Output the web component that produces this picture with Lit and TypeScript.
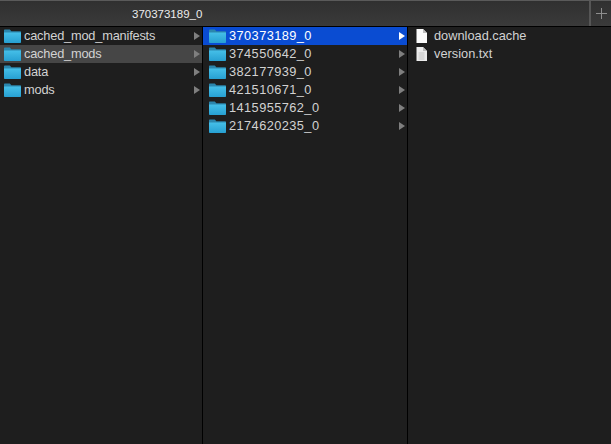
import { LitElement, html, css, svg } from "lit";
import { customElement } from "lit/decorators.js";

const folder = svg`<svg class="ic" width="17" height="14" viewBox="0 0 17 14">
  <defs><linearGradient id="fg" x1="0" y1="0" x2="0" y2="1"><stop offset="0" stop-color="#45bfe8"/><stop offset="1" stop-color="#27a0d2"/></linearGradient></defs>
  <path d="M0 1.2Q0 .5.7.5H5.8L7.4 2.2H16.3Q17 2.2 17 3V4H0Z" fill="#2b86ad"/>
  <path d="M0 3.6H17V13.2Q17 14 16.2 14H.8Q0 14 0 13.2Z" fill="url(#fg)"/>
</svg>`;

const doc = (lined: boolean) => svg`<svg class="ic" width="11" height="14" viewBox="0 0 11 14">
  <path d="M.5 0H7L11 4V14H.5Z" fill="${lined ? "#ececec" : "#fbfbfb"}"/>
  <path d="M7 0L11 4H7Z" fill="#bdbdbd"/>
  ${lined ? svg`<path d="M2.5 6H8.5M2.5 8H8.5M2.5 10H8.5M2.5 12H8.5" stroke="#c4c4c4" stroke-width="1"/>` : ""}
</svg>`;

type Row = { name: string; state?: "sel" | "path" };

const col1: Row[] = [
  { name: "cached_mod_manifests" },
  { name: "cached_mods", state: "path" },
  { name: "data" },
  { name: "mods" },
];
const col2: Row[] = [
  { name: "370373189_0", state: "sel" },
  { name: "374550642_0" },
  { name: "382177939_0" },
  { name: "421510671_0" },
  { name: "1415955762_0" },
  { name: "2174620235_0" },
];

@customElement("app-root")
export class AppRoot extends LitElement {
  static styles = css`
    :host {
      display: flex;
      flex-direction: column;
      width: 611px;
      height: 444px;
      background: #1e1e1e;
      overflow: hidden;
      font-family: "Liberation Sans", Arial, sans-serif;
      font-size: 12.8px;
      color: #d2d2d2;
    }
    .tabs {
      display: flex;
      height: 25px;
      flex: none;
      background: linear-gradient(#303030, #3a3a3a);
      border-top: 1px solid #5a5a5a;
      border-bottom: 1px solid #000;
    }
    .title {
      flex: none;
      width: 589px;
      box-sizing: border-box;
      padding: 6px 0 0 132px;
      font-size: 11.5px;
      line-height: 14px;
      color: #ececec;
    }
    .plus {
      border-left: 2px solid #565656;
      flex-grow: 1;
      display: flex;
      align-items: center;
      justify-content: center;
    }
    .cols {
      display: grid;
      grid-template-columns: 203px 205px 1fr;
      flex: 1;
    }
    .col {
      border-right: 1px solid #000;
    }
    .col:last-child {
      border-right: none;
      padding-left: 8px;
    }
    .row {
      display: flex;
      align-items: center;
      height: 18px;
      box-sizing: border-box;
      padding: 0 2px 0 4px;
    }
    .col.mid .row {
      padding-left: 6px;
    }
    .ic {
      flex: none;
      display: block;
    }
    .name {
      flex: 1;
      margin-left: 3px;
      line-height: 18px;
      letter-spacing: -0.2px;
      white-space: nowrap;
    }
    .mid .name {
      letter-spacing: 0.42px;
    }
    .row.file {
      padding: 0;
    }
    .file .name {
      margin-left: 7px;
      letter-spacing: 0;
    }
    .path {
      background: #464646;
    }
    .sel {
      background: #0a4cd2;
      color: #fff;
    }
    .arrow {
      flex: none;
      width: 0;
      height: 0;
      border-left: 6px solid #7f7f7f;
      border-top: 4px solid transparent;
      border-bottom: 4px solid transparent;
    }
    .sel .arrow {
      border-left-color: #fff;
    }
  `;

  private renderRow(r: Row) {
    return html`<div class="row ${r.state ?? ""}">
      ${folder}<span class="name">${r.name}</span><span class="arrow"></span>
    </div>`;
  }

  render() {
    return html`
      <div class="tabs">
        <div class="title">370373189_0</div>
        <div class="plus">
          <svg width="11" height="11" viewBox="0 0 11 11"><path d="M5.5 0V11M0 5.5H11" stroke="#8e8e8e" stroke-width="1"/></svg>
        </div>
      </div>
      <div class="cols">
        <div class="col">${col1.map((r) => this.renderRow(r))}</div>
        <div class="col mid">${col2.map((r) => this.renderRow(r))}</div>
        <div class="col">
          <div class="row file">${doc(false)}<span class="name">download.cache</span></div>
          <div class="row file">${doc(true)}<span class="name">version.txt</span></div>
        </div>
      </div>
    `;
  }
}
